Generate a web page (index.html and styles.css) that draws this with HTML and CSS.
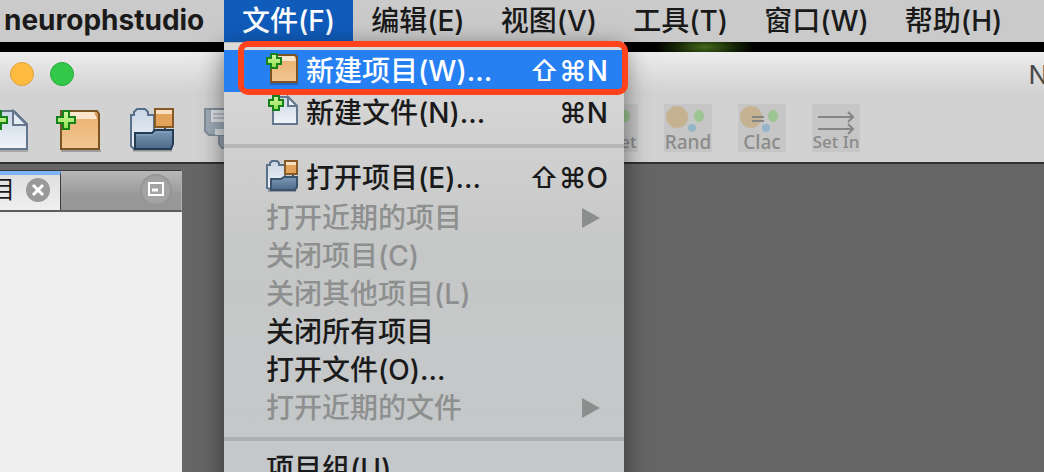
FILE: index.html
```html
<!DOCTYPE html>
<html lang="zh-CN">
<head>
    <meta charset="UTF-8">
    <meta name="viewport" content="width=device-width, initial-scale=1.0">
    <title>neurophstudio</title>
    <link rel="stylesheet" href="styles.css">
</head>
<body>
    <svg class="sprite" aria-hidden="true">
        <defs>
            <linearGradient id="box" x1="0" y1="0" x2="0" y2="1">
                <stop offset="0" stop-color="#e9b06c"/>
                <stop offset="1" stop-color="#f3c793"/>
            </linearGradient>
            <linearGradient id="paper" x1="0" y1="0" x2="0" y2="1">
                <stop offset="0" stop-color="#c9d6e4"/>
                <stop offset="1" stop-color="#f0f4f8"/>
            </linearGradient>
            <linearGradient id="folder" x1="0" y1="0" x2="0" y2="1">
                <stop offset="0" stop-color="#7d9ab8"/>
                <stop offset="1" stop-color="#4c6a88"/>
            </linearGradient>
            <linearGradient id="green" x1="0" y1="0" x2="0" y2="1">
                <stop offset="0" stop-color="#d9f7a6"/>
                <stop offset="1" stop-color="#8be04d"/>
            </linearGradient>
        </defs>
        <!-- toolbar size -->
        <symbol id="plus" viewBox="0 0 20 20">
            <path d="M7 1h6v6h6v6h-6v6H7v-6H1V7h6z" fill="url(#green)" stroke="#16801a" stroke-width="2"/>
        </symbol>
        <symbol id="new-project" viewBox="0 0 48 48">
            <path d="M7 47h40" stroke="#000" stroke-opacity=".25" stroke-width="2"/>
            <path d="M7 7h36l2 3v35H7z" fill="url(#box)" stroke="#7c5423" stroke-width="2"/>
            <path d="M8 8h33l3 7H8z" fill="#fbe6cd"/>
            <path d="M40 8l4 2v7z" fill="#d69a58"/>
            <use href="#plus" x="2" y="6" width="20" height="20"/>
        </symbol>
        <symbol id="new-file" viewBox="0 0 48 48">
            <path d="M11 47h37" stroke="#000" stroke-opacity=".2" stroke-width="2"/>
            <path d="M11 7h23l13 13v25H11z" fill="url(#paper)" stroke="#64778c" stroke-width="2"/>
            <path d="M33 7v14h14z" fill="#e3eaf1" stroke="#64778c" stroke-width="2"/>
            <use href="#plus" x="8" y="6" width="20" height="20"/>
        </symbol>
        <symbol id="open-project" viewBox="0 0 48 48">
            <path d="M5 46h39" stroke="#000" stroke-opacity=".3" stroke-width="3"/>
            <path d="M3 42V11h3V8l3-3h8l3 3v3h6v30L6 45z" fill="url(#paper)" stroke="#59708a" stroke-width="2"/>
            <path d="M37 22v6" stroke="#354f69" stroke-width="2"/>
            <path d="M7 29h17l3-3h18v14l-2 5H7z" fill="url(#folder)" stroke="#243c54" stroke-width="2"/>
            <path d="M8 31h17l3-3h16" fill="none" stroke="#86a1bc"/>
            <path d="M27 5h18v18H27z" fill="#e2a45a" stroke="#865a24" stroke-width="2"/>
            <path d="M28 6h16v4H28z" fill="#f8dfc0"/>
        </symbol>
        <!-- menu size -->
        <symbol id="plus-small" viewBox="0 0 16 16">
            <path d="M5 1h6v4h4v6h-4v4H5v-4H1V5h4z" fill="url(#green)" stroke="#16801a" stroke-width="2"/>
        </symbol>
        <symbol id="new-project-small" viewBox="0 0 32 32">
            <path d="M4 31h28" stroke="#000" stroke-opacity=".2" stroke-width="2"/>
            <path d="M5 2h24l2 2v25H5z" fill="url(#box)" stroke="#7c5423" stroke-width="2"/>
            <path d="M6 3h22l2 5H6z" fill="#fbe6cd"/>
            <use href="#plus-small" width="16" height="16"/>
        </symbol>
        <symbol id="new-file-small" viewBox="0 0 32 32">
            <path d="M7 2h15l9 9v18H7z" fill="url(#paper)" stroke="#64778c" stroke-width="2"/>
            <path d="M22 2v9h9z" fill="#e9eff5" stroke="#64778c" stroke-width="2"/>
            <use href="#plus-small" x="2" width="16" height="16"/>
        </symbol>
        <symbol id="open-project-small" viewBox="0 0 32 32">
            <path d="M2 31h28" stroke="#000" stroke-opacity=".25" stroke-width="2"/>
            <path d="M1 28V5h3V3l2-2h5l2 2v2h6v20L4 29z" fill="url(#paper)" stroke="#59708a" stroke-width="2"/>
            <path d="M27 13v6" stroke="#354f69" stroke-width="2"/>
            <path d="M5 19h10l3-2h13v10l-2 3H5z" fill="url(#folder)" stroke="#3a536d" stroke-width="2"/>
            <path d="M19 1h12v13H19z" fill="#e2a45a" stroke="#865a24" stroke-width="2"/>
            <path d="M20 2h10v3H20z" fill="#f8dfc0"/>
        </symbol>
    </svg>

    <nav class="menubar">
        <strong class="app-name">neurophstudio</strong>
        <div class="menu-root">
            <button class="menu-title active" aria-expanded="true">文件(F)</button>
            <div class="menu" role="menu">
                <button class="item tall selected" role="menuitem">
                    <svg class="item-icon"><use href="#new-project-small"/></svg>
                    <span class="label">新建项目(W)...</span>
                    <span class="keys">⇧⌘N</span>
                </button>
                <button class="item tall" role="menuitem">
                    <svg class="item-icon"><use href="#new-file-small"/></svg>
                    <span class="label">新建文件(N)...</span>
                    <span class="keys">⌘N</span>
                </button>
                <hr class="separator">
                <button class="item tall" role="menuitem">
                    <svg class="item-icon"><use href="#open-project-small"/></svg>
                    <span class="label">打开项目(E)...</span>
                    <span class="keys">⇧⌘O</span>
                </button>
                <button class="item" role="menuitem" disabled>
                    <span class="label">打开近期的项目</span>
                    <span class="arrow"></span>
                </button>
                <button class="item" role="menuitem" disabled><span class="label">关闭项目(C)</span></button>
                <button class="item" role="menuitem" disabled><span class="label">关闭其他项目(L)</span></button>
                <button class="item" role="menuitem"><span class="label">关闭所有项目</span></button>
                <button class="item" role="menuitem"><span class="label">打开文件(O)...</span></button>
                <button class="item" role="menuitem" disabled>
                    <span class="label">打开近期的文件</span>
                    <span class="arrow"></span>
                </button>
                <hr class="separator">
                <button class="item" role="menuitem"><span class="label">项目组(U)</span></button>
                <div class="marker"></div>
            </div>
        </div>
        <button class="menu-title">编辑(E)</button>
        <button class="menu-title">视图(V)</button>
        <button class="menu-title">工具(T)</button>
        <button class="menu-title">窗口(W)</button>
        <button class="menu-title">帮助(H)</button>
    </nav>

    <div class="wallpaper"></div>

    <main class="window">
        <header class="window-head">
            <div class="titlebar">
                <button class="light minimize" aria-label="最小化"></button>
                <button class="light maximize" aria-label="缩放"></button>
                <span class="window-title">N</span>
            </div>
            <div class="toolbar">
                <div class="tools">
                    <button class="tool" aria-label="新建文件"><svg><use href="#new-file"/></svg></button>
                    <button class="tool" aria-label="新建项目"><svg><use href="#new-project"/></svg></button>
                    <button class="tool" aria-label="打开项目"><svg><use href="#open-project"/></svg></button>
                    <button class="tool faded" aria-label="全部保存" disabled>
                        <svg viewBox="0 0 48 48">
                            <path d="M17 18h30v26H20l-3-4z" fill="#8c9aa8" stroke="#6f7f8f" stroke-width="2"/>
                            <path d="M3 5h36v26H7l-4-4z" fill="#93a3b3" stroke="#6f7f8f" stroke-width="2"/>
                            <path d="M9 6h24v12H9z" fill="#e4e8ec"/>
                            <path d="M11 10h20M11 14h20" stroke="#b3bcc5" stroke-width="2"/>
                            <path d="M13 25h17v6H13z" fill="#dfe4e8"/>
                        </svg>
                    </button>
                </div>
                <div class="tools network">
                    <button class="tool net" disabled>
                        <svg viewBox="0 0 48 48">
                            <circle cx="13" cy="13" r="11" fill="#c5b291"/>
                            <ellipse cx="35" cy="12" rx="5" ry="6" fill="#9bc592"/>
                            <circle cx="28" cy="24" r="4" fill="#92b5c7"/>
                        </svg>
                        <span>Reset</span>
                    </button>
                    <button class="tool net wide" disabled>
                        <svg viewBox="0 0 48 48">
                            <circle cx="13" cy="13" r="11" fill="#c5b291"/>
                            <ellipse cx="35" cy="12" rx="5" ry="6" fill="#9bc592"/>
                            <circle cx="28" cy="24" r="4" fill="#92b5c7"/>
                        </svg>
                        <span>Rand</span>
                    </button>
                    <button class="tool net wide" disabled>
                        <svg viewBox="0 0 48 48">
                            <circle cx="13" cy="13" r="11" fill="#c5b291"/>
                            <ellipse cx="35" cy="12" rx="5" ry="6" fill="#9bc592"/>
                            <circle cx="28" cy="24" r="4" fill="#92b5c7"/>
                            <path d="M14 13h12M14 17h12" stroke="#858585" stroke-width="2"/>
                        </svg>
                        <span>Clac</span>
                    </button>
                    <button class="tool net" disabled>
                        <svg viewBox="0 0 48 48">
                            <path d="M6 13h35M36 8l5 5-5 5M6 25h35M36 20l5 5-5 5" fill="none" stroke="#858585" stroke-width="2"/>
                        </svg>
                        <span>Set In</span>
                    </button>
                </div>
            </div>
        </header>

        <section class="panel">
            <div class="tabs">
                <div class="tab">
                    <span class="tab-name">目</span>
                    <button class="close" aria-label="关闭">
                        <svg viewBox="0 0 24 24">
                            <circle cx="12" cy="12" r="12" fill="#999"/>
                            <path d="M7 7l10 10M17 7L7 17" stroke="#fff" stroke-width="3"/>
                        </svg>
                    </button>
                </div>
                <button class="collapse" aria-label="最小化窗口组">
                    <svg viewBox="0 0 32 32">
                        <circle cx="16" cy="16" r="15" fill="#a3a3a3" stroke="#969696" stroke-width="2"/>
                        <path d="M9 9h14v12H9z" fill="none" stroke="#fff" stroke-width="2"/>
                        <path d="M12 16h6" stroke="#fff" stroke-width="3"/>
                    </svg>
                </button>
            </div>
            <div class="panel-body"></div>
        </section>
    </main>
</body>
</html>
```

FILE: styles.css
```css
* {
    box-sizing: border-box;
}

body {
    margin: 0;
    height: 100vh;
    display: flex;
    flex-direction: column;
    overflow: hidden;
    background: #666;
    font-family: Inter, "Noto Sans CJK SC", sans-serif;
    font-size: 28px;
    font-weight: 500;
    color: #1a1a1a;
}

button {
    margin: 0;
    padding: 0;
    border: none;
    background: none;
    font: inherit;
    color: inherit;
}

.sprite {
    position: absolute;
    width: 0;
    height: 0;
}

/* menu bar */
.menubar {
    display: flex;
    flex: none;
    height: 42px;
    background: #cacaca;
    line-height: 40px;
    white-space: nowrap;
}

.app-name {
    width: 224px;
    padding-left: 4px;
    font-weight: 700;
}

.menu-root {
    position: relative;
    z-index: 2;
}

.menu-title {
    display: block;
    height: 42px;
    padding: 0 18px;
    line-height: 40px;
}

.menu-title.active {
    background: #105cbb;
    color: #fff;
}

/* drop-down */
.menu {
    position: absolute;
    top: 42px;
    left: 0;
    width: 400px;
    padding: 7px 0 8px;
    border-top: 1px solid #b4b4b4;
    background: linear-gradient(#dadad9, #c6c7c7 45%, #c4c8ca);
    box-shadow: 0 6px 24px rgba(0, 0, 0, 0.5);
}

.item {
    display: flex;
    align-items: center;
    width: 100%;
    height: 38px;
    padding: 0 16px 0 42px;
    line-height: 38px;
    text-align: left;
}

.item.tall {
    height: 42px;
}

.item.selected {
    background: #2680f2;
    color: #fff;
}

.item:disabled {
    color: #8e8f8f;
}

.item-icon {
    flex: none;
    width: 32px;
    height: 32px;
    margin: 0 8px 4px 0;
}

.label {
    flex: 1;
}

.arrow {
    margin-right: 8px;
    border-left: 18px solid #8c8d8d;
    border-top: 10px solid transparent;
    border-bottom: 10px solid transparent;
}

.separator {
    height: 4px;
    margin: 10px 0 9px;
    border: none;
    background: rgba(0, 0, 0, 0.12);
}

.marker {
    position: absolute;
    top: -2px;
    left: 14px;
    width: 390px;
    height: 54px;
    border: 6px solid #ff431c;
    border-radius: 10px;
}

.wallpaper {
    flex: none;
    height: 10px;
    background: radial-gradient(ellipse 50px 14px at 705px 5px, #456a1c, #142406 60%, #000) #000;
}

/* application window */
.window {
    flex: 1;
    display: flex;
    flex-direction: column;
    min-height: 0;
}

.window-head {
    flex: none;
    height: 112px;
    border-bottom: 2px solid #303032;
    background: linear-gradient(#ededed, #d2d2d2 40px);
}

.titlebar {
    display: flex;
    align-items: center;
    gap: 16px;
    height: 44px;
    padding-left: 10px;
    overflow: hidden;
}

.light {
    width: 24px;
    height: 24px;
    border: 1px solid #dea03a;
    border-radius: 50%;
    background: #fdbc40;
}

.light.maximize {
    border-color: #27a93a;
    background: #34c84a;
}

.window-title {
    margin-left: auto;
    margin-right: -4px;
    font-size: 26px;
    font-weight: 400;
    color: #4a4a4a;
}

.toolbar {
    display: flex;
    padding-top: 8px;
    margin-left: -20px;
}

.tools {
    display: flex;
    gap: 26px;
}

.network {
    margin-left: 340px;
}

.tool {
    flex: none;
    width: 48px;
    height: 48px;
}

.tool svg {
    display: block;
    width: 48px;
    height: 48px;
}

.tool.faded {
    opacity: 0.8;
}

.net {
    position: relative;
    background: #c6c6c6;
    color: #8a8a8a;
    font-family: "Noto Sans", sans-serif;
    font-size: 17px;
    font-weight: 500;
    line-height: 20px;
    white-space: nowrap;
}

.net span {
    position: absolute;
    left: 0;
    right: 0;
    bottom: 0;
    text-align: center;
}

.net.wide {
    font-size: 19px;
}

/* projects panel */
.panel {
    flex: 1;
    display: flex;
    flex-direction: column;
    width: 182px;
    margin-top: 6px;
}

.tabs {
    display: flex;
    justify-content: space-between;
    height: 42px;
    border-top: 1px solid #3c3c3c;
    border-right: 1px solid #b0b0b0;
    border-bottom: 2px solid #5c5c5c;
    background: linear-gradient(#b8b8b8, #999 60%, #979797);
}

.tab {
    display: flex;
    align-items: center;
    width: 61px;
    padding-bottom: 5px;
    border-top: 4px solid #7db4f8;
    border-right: 1px solid #3c3c3c;
    background: linear-gradient(#e0e0e0, #efefef);
}

.tab-name {
    margin-left: -9px;
    font-size: 24px;
    font-weight: 400;
    line-height: 28px;
}

.close {
    width: 24px;
    height: 24px;
    margin-left: 11px;
}

.close svg,
.collapse svg {
    display: block;
    width: 100%;
    height: 100%;
}

.collapse {
    width: 32px;
    height: 32px;
    margin: 3px 9px 0 0;
}

.panel-body {
    flex: 1;
    background: #eee;
}
```
